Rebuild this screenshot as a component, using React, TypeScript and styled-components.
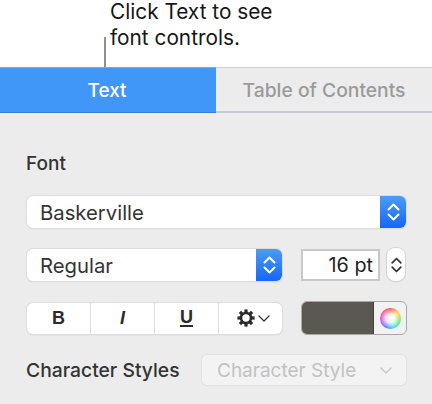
import React from "react";
import styled, { createGlobalStyle } from "styled-components";

const GlobalStyle = createGlobalStyle`
  html, body {
    margin: 0;
    padding: 0;
    background: #ffffff;
  }
  * {
    box-sizing: border-box;
  }
`;

const Chevrons: React.FC<{ color: string; small?: boolean }> = ({ color, small }) => (
  <svg width={small ? 13 : 15} height={24} viewBox="0 0 15 24" fill="none">
    <path d="M2.5 9.5 L7.5 4.5 L12.5 9.5" stroke={color} strokeWidth="2" strokeLinecap="round" strokeLinejoin="round" />
    <path d="M2.5 14.5 L7.5 19.5 L12.5 14.5" stroke={color} strokeWidth="2" strokeLinecap="round" strokeLinejoin="round" />
  </svg>
);

const Gear = () => (
  <svg width="18" height="18" viewBox="0 0 18 18">
    <g fill="#2b2b2b">
      {[0, 45, 90, 135, 180, 225, 270, 315].map((a) => (
        <rect key={a} x="7.4" y="0.4" width="3.2" height="4" transform={`rotate(${a} 9 9)`} />
      ))}
    </g>
    <circle cx="9" cy="9" r="5" fill="none" stroke="#2b2b2b" strokeWidth="2.6" />
  </svg>
);

const SmallChevron: React.FC<{ color: string; width: number }> = ({ color, width }) => (
  <svg width={width} height="7" viewBox="0 0 12 7" fill="none">
    <path d="M1 1 L6 6 L11 1" stroke={color} strokeWidth="1.3" strokeLinecap="round" strokeLinejoin="round" />
  </svg>
);

const App: React.FC = () => (
  <Page>
    <GlobalStyle />
    <Callout>
      <CalloutLine />
      <CalloutText>
        Click Text to see
        <br />
        font controls.
      </CalloutText>
    </Callout>
    <Tabs>
      <ActiveTab>Text</ActiveTab>
      <InactiveTab>Table of Contents</InactiveTab>
    </Tabs>
    <Panel>
      <SectionLabel>Font</SectionLabel>
      <Select>
        <SelectValue>Baskerville</SelectValue>
        <SelectArrow>
          <Chevrons color="#ffffff" />
        </SelectArrow>
      </Select>
      <SizeRow>
        <StyleSelect>
          <SelectValue>Regular</SelectValue>
          <SelectArrow>
            <Chevrons color="#ffffff" />
          </SelectArrow>
        </StyleSelect>
        <SizeInput>16 pt</SizeInput>
        <Stepper>
          <Chevrons color="#333333" small />
        </Stepper>
      </SizeRow>
      <FormatRow>
        <ButtonGroup>
          <FormatButton>
            <b>B</b>
          </FormatButton>
          <FormatButton>
            <ItalicMark>I</ItalicMark>
          </FormatButton>
          <FormatButton>
            <UnderlineMark>U</UnderlineMark>
          </FormatButton>
          <GearButton>
            <Gear />
            <SmallChevron color="#333333" width={12} />
          </GearButton>
        </ButtonGroup>
        <ColorControl>
          <Swatch />
          <WheelCell>
            <Wheel />
          </WheelCell>
        </ColorControl>
      </FormatRow>
      <CharacterRow>
        <CharacterLabel>Character Styles</CharacterLabel>
        <DisabledSelect>
          <span>Character Style</span>
          <SmallChevron color="#c4c4c4" width={12} />
        </DisabledSelect>
      </CharacterRow>
    </Panel>
  </Page>
);

export default App;

const Page = styled.div`
  width: 432px;
  height: 404px;
  overflow: hidden;
  font-family: "Inter", "Liberation Sans", sans-serif;
  color: #333333;
`;

const Callout = styled.div`
  height: 67px;
  padding-left: 104px;
  display: flex;
  align-items: flex-end;
  gap: 4px;
`;

const CalloutLine = styled.div`
  width: 2px;
  height: 30px;
  background: #8f8f8f;
`;

const CalloutText = styled.div`
  align-self: flex-start;
  margin-top: -1px;
  font-size: 20.8px;
  line-height: 26px;
  color: #161616;
`;

const Tabs = styled.div`
  display: flex;
  height: 46px;
`;

const ActiveTab = styled.div`
  width: 216px;
  padding-right: 2px;
  background: #4197f7;
  border-top: 1px solid #6aaaf0;
  border-bottom: 1px solid #3b7fd0;
  color: #ffffff;
  font-size: 19px;
  font-weight: 500;
  display: flex;
  align-items: center;
  justify-content: center;
`;

const InactiveTab = styled.div`
  flex: 1;
  background: #ececec;
  border-top: 1px solid #cfcfcf;
  border-bottom: 2px solid #c5c8cc;
  color: #9a9a9a;
  font-size: 19.3px;
  font-weight: 500;
  display: flex;
  align-items: center;
  justify-content: center;
`;

const Panel = styled.div`
  height: 291px;
  background: #ececec;
  padding: 40px 26px 0 27px;
`;

const SectionLabel = styled.div`
  margin-left: -1px;
  font-size: 19px;
  font-weight: 500;
  line-height: 22px;
  color: #333333;
`;

const Select = styled.div`
  margin-top: 21px;
  height: 32px;
  width: 379px;
  display: flex;
  background: #ffffff;
  border-radius: 6px;
  box-shadow: 0 0 0 1px #dcdcdc, 0 1px 1px #c4c4c4;
  overflow: hidden;
`;

const StyleSelect = styled(Select)`
  margin-top: 0;
  width: 255px;
`;

const SelectValue = styled.div`
  flex: 1;
  padding-left: 13px;
  font-size: 20.3px;
  line-height: 33px;
  color: #333333;
`;

const SelectArrow = styled.div`
  width: 26px;
  background: linear-gradient(#4d9bf8, #1567f5);
  display: flex;
  align-items: center;
  justify-content: center;
`;

const SizeRow = styled.div`
  margin-top: 20px;
  display: flex;
  align-items: center;
`;

const SizeInput = styled.div`
  margin-left: 19px;
  width: 79px;
  height: 32px;
  background: #ffffff;
  border: 2px solid #c8c8c8;
  font-size: 19.8px;
  line-height: 28px;
  text-align: right;
  padding-right: 5px;
  color: #222222;
`;

const Stepper = styled.div`
  margin-left: 7px;
  width: 18px;
  height: 33px;
  background: #ffffff;
  border-radius: 8px;
  box-shadow: 0 0 0 1px #d4d4d4, 0 1px 1px #c4c4c4;
  display: flex;
  align-items: center;
  justify-content: center;
`;

const FormatRow = styled.div`
  margin-top: 20px;
  display: flex;
  align-items: center;
  justify-content: space-between;
  width: 379px;
`;

const ButtonGroup = styled.div`
  width: 255px;
  height: 31px;
  display: flex;
  background: #ffffff;
  border-radius: 6px;
  box-shadow: 0 0 0 1px #dcdcdc, 0 1px 1px #c0c0c0;
  overflow: hidden;
`;

const FormatButton = styled.div`
  width: 64px;
  border-right: 1px solid #dedede;
  display: flex;
  align-items: center;
  justify-content: center;
  font-size: 18px;
  color: #2b2b2b;
  font-family: "Liberation Sans", sans-serif;
`;

const GearButton = styled.div`
  flex: 1;
  padding-left: 6px;
  display: flex;
  align-items: center;
  justify-content: center;
  gap: 3px;
`;

const ItalicMark = styled.span`
  font-weight: 700;
  font-style: italic;
`;

const UnderlineMark = styled.span`
  font-weight: 700;
  border-bottom: 2px solid #2b2b2b;
  line-height: 16px;
`;

const ColorControl = styled.div`
  width: 106px;
  height: 34px;
  margin-right: -1px;
  display: flex;
  border-radius: 6px;
  border: 1px solid #a8a8a8;
  overflow: hidden;
  background: #f2f2f2;
`;

const Swatch = styled.div`
  width: 72px;
  background: #5b5751;
  border-right: 1px solid #45423d;
`;

const WheelCell = styled.div`
  flex: 1;
  display: flex;
  align-items: center;
  justify-content: center;
`;

const Wheel = styled.div`
  width: 21px;
  height: 21px;
  border-radius: 50%;
  background: radial-gradient(circle, #ffffff 0%, rgba(255, 255, 255, 0.85) 30%, rgba(255, 255, 255, 0) 70%),
    conic-gradient(#ff4f4f, #ffd23f, #6fe85a, #3fe0d8, #4a7bff, #c64cf0, #ff4f8f, #ff4f4f);
`;

const CharacterRow = styled.div`
  margin-top: 20px;
  display: flex;
  align-items: center;
  justify-content: space-between;
  width: 379px;
`;

const CharacterLabel = styled.div`
  margin-left: -1px;
  font-size: 19.3px;
  font-weight: 500;
  color: #333333;
`;

const DisabledSelect = styled.div`
  width: 204px;
  height: 30px;
  background: #f3f3f3;
  border-radius: 5px;
  box-shadow: 0 0 0 1px #e2e2e2;
  display: flex;
  align-items: center;
  justify-content: space-between;
  padding: 0 14px 0 15px;
  font-size: 19px;
  color: #c2c2c2;
`;
